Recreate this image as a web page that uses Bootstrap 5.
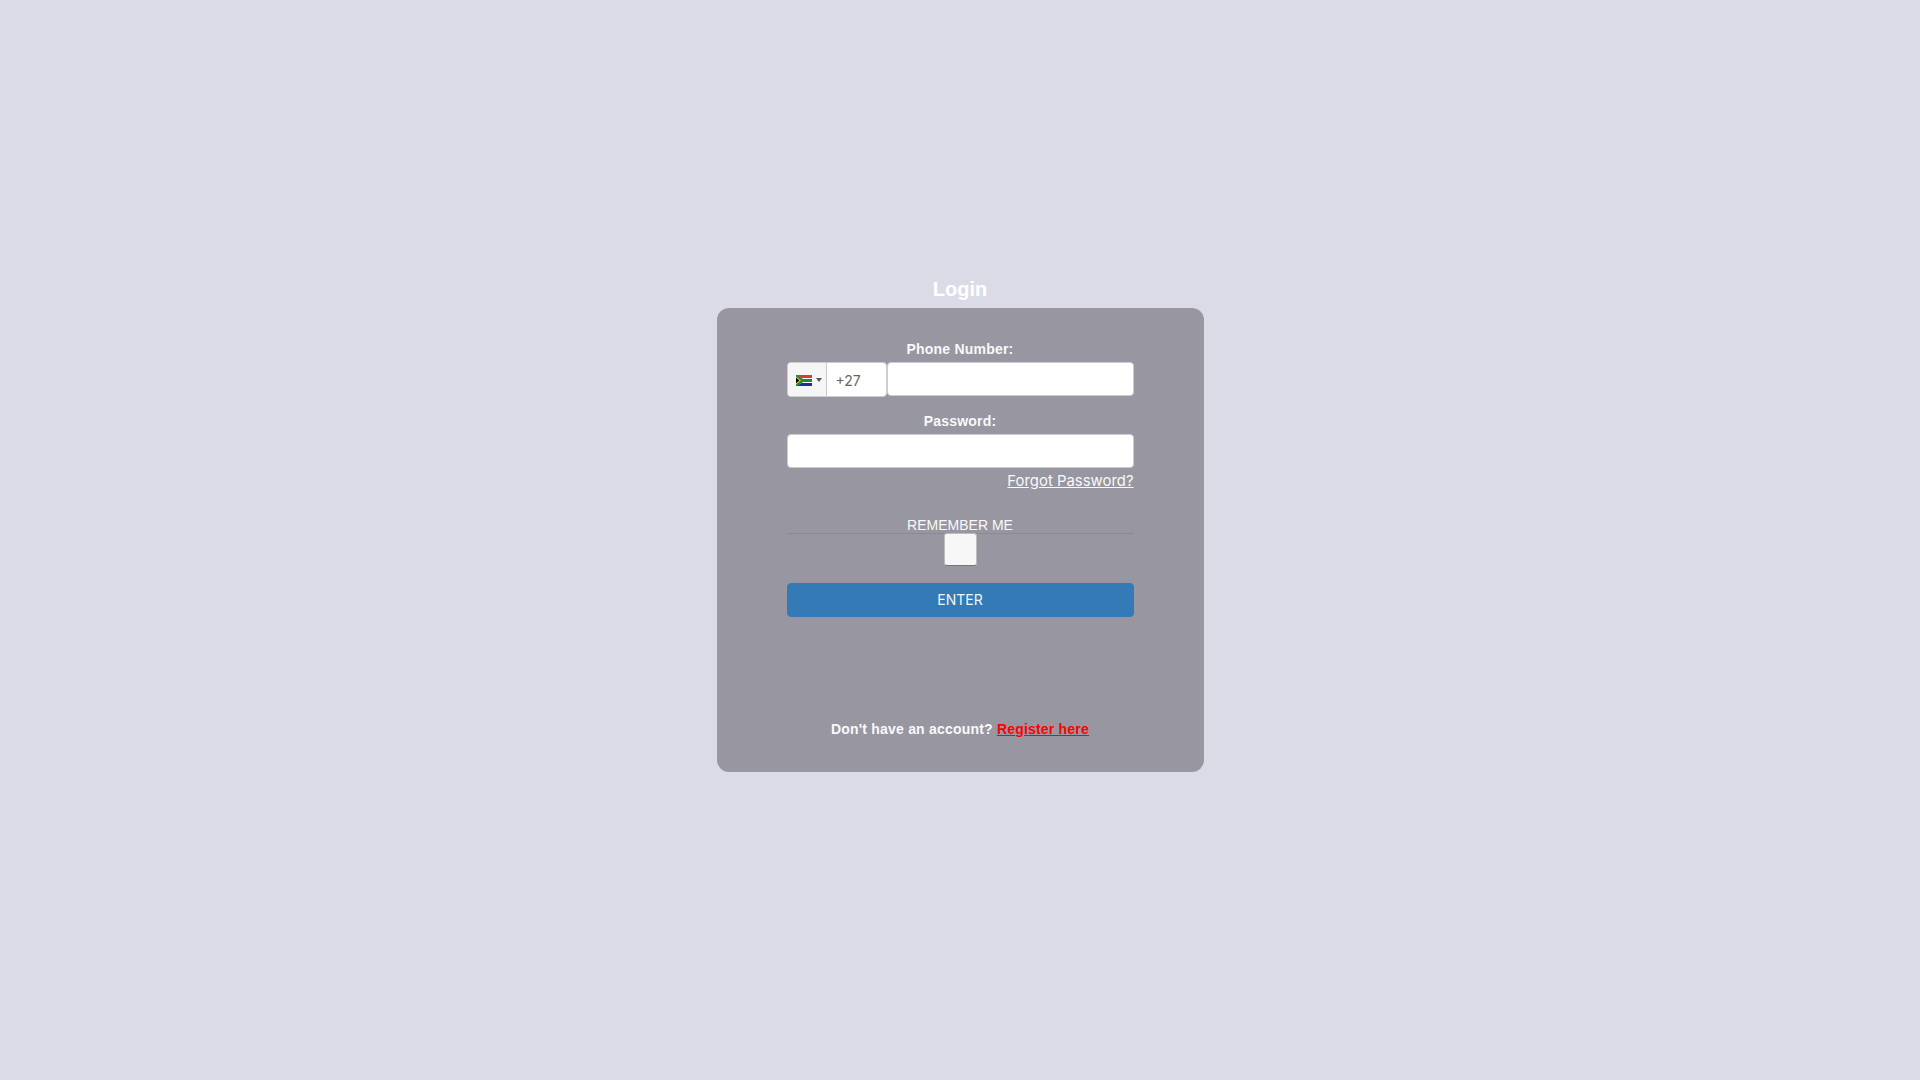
<!DOCTYPE html>
<html lang="en">
<head>
<meta charset="utf-8">
<title>Login</title>
<link href="https://cdn.jsdelivr.net/npm/bootstrap@5.3.0/dist/css/bootstrap.min.css" rel="stylesheet">
<style>
html,body{height:100%}
body{background:#dbdbe8;font-family:"Liberation Sans",Arial,sans-serif;color:#fff}
.login-wrap{padding-top:278px}
.login-title{font-size:20px;line-height:23px;font-weight:700;color:#fff;margin:0 0 7px}
.login-panel{width:487px;height:464px;background:#9896a0;border-radius:12px;padding:31px 70px 33px}
.field-label{display:block;font-size:14px;line-height:20px;font-weight:700;letter-spacing:.2px;color:#f9f9fb;text-align:center;margin:0 0 3px}
.field-label.second{margin-top:14px}
.field-input.form-control{height:34px;min-height:0;padding:6px 12px;border:1px solid #ccc;border-radius:4px;background:#fff;font-size:14px}
.phone-row{height:35px}
.dial{width:100px;height:35px;flex:none;background:#fff;border:1px solid #ccc;border-radius:4px;overflow:hidden}
.dial-flag{width:39px;flex:none;background:#f5f5f5;border-right:1px solid #ccc;padding:1px 0 0 8px;gap:4px}
.dial-caret{width:0;height:0;border-left:3px solid transparent;border-right:3px solid transparent;border-top:4px solid #555}
.dial-code{font-family:Inter,"Noto Sans",sans-serif;font-size:14px;color:#666;padding-left:9px;padding-top:1px}
.forgot{font-family:Inter,"Noto Sans",sans-serif;font-size:14.9px;line-height:20px;color:#f9f9fb;text-decoration:underline;margin-top:3px}
.forgot:hover{color:#fff}
.remember{font-size:14px;line-height:16px;color:#f9f9fb;text-align:center;margin-top:24px;border-bottom:1px solid #8b8994;height:17px}
.remember-box{margin-top:-1px}
.remember-box .form-check-input{width:33px;height:33px;margin:0;background-color:#f7f7f7;border:1px solid #bdbdbd;border-bottom-color:#777;border-radius:3px;float:none}
.enter-btn.btn{height:34px;width:100%;margin-top:17px;padding:0 0 2px;background:#337ab7;border:1px solid #337ab7;border-radius:4px;color:#f2f6fa;font-family:Inter,"Noto Sans",sans-serif;font-size:14px}
.signup{font-size:14px;line-height:20px;font-weight:700;letter-spacing:.2px;color:#f9f9fb;text-align:center;margin-top:102px}
.signup a{color:#f00;text-decoration:underline}
</style>
</head>
<body>
<main class="login-wrap d-flex flex-column align-items-center">
  <h1 class="login-title">Login</h1>
  <div class="login-panel">
    <form>
      <label class="field-label" for="phone">Phone Number:</label>
      <div class="phone-row d-flex align-items-start">
        <div class="dial d-flex align-items-stretch">
          <div class="dial-flag d-flex align-items-center">
            <svg width="16" height="11" viewBox="0 0 16 11" shape-rendering="crispEdges" aria-hidden="true">
              <rect width="16" height="11" fill="#fff"/>
              <rect width="16" height="3" fill="#e0392b"/>
              <rect y="8" width="16" height="3" fill="#1a2f9e"/>
              <g shape-rendering="auto">
                <path d="M0 0 L6.5 3.5 H16 V7.5 H6.5 L0 11 Z" fill="#fff"/>
                <path d="M0 0 H1.5 L7 4 H16 V7 H7 L1.5 11 H0 Z" fill="#1b8a3c"/>
                <path d="M0 1.5 L5 5.5 L0 9.5 Z" fill="#f5c518"/>
                <path d="M0 2.8 L3.4 5.5 L0 8.2 Z" fill="#000"/>
              </g>
            </svg>
            <span class="dial-caret"></span>
          </div>
          <div class="dial-code d-flex align-items-center">+27</div>
        </div>
        <input id="phone" class="field-input form-control flex-grow-1" type="tel">
      </div>
      <label class="field-label second" for="pass">Password:</label>
      <input id="pass" class="field-input form-control" type="password">
      <div class="text-end"><a class="forgot d-inline-block" href="#">Forgot Password?</a></div>
      <div class="remember">REMEMBER ME</div>
      <div class="remember-box d-flex justify-content-center"><input class="form-check-input" type="checkbox" aria-label="Remember me"></div>
      <button class="enter-btn btn btn-primary" type="button">ENTER</button>
      <div class="signup">Don't have an account? <a href="#">Register here</a></div>
    </form>
  </div>
</main>
<script src="https://cdn.jsdelivr.net/npm/bootstrap@5.3.0/dist/js/bootstrap.bundle.min.js"></script>
</body>
</html>
